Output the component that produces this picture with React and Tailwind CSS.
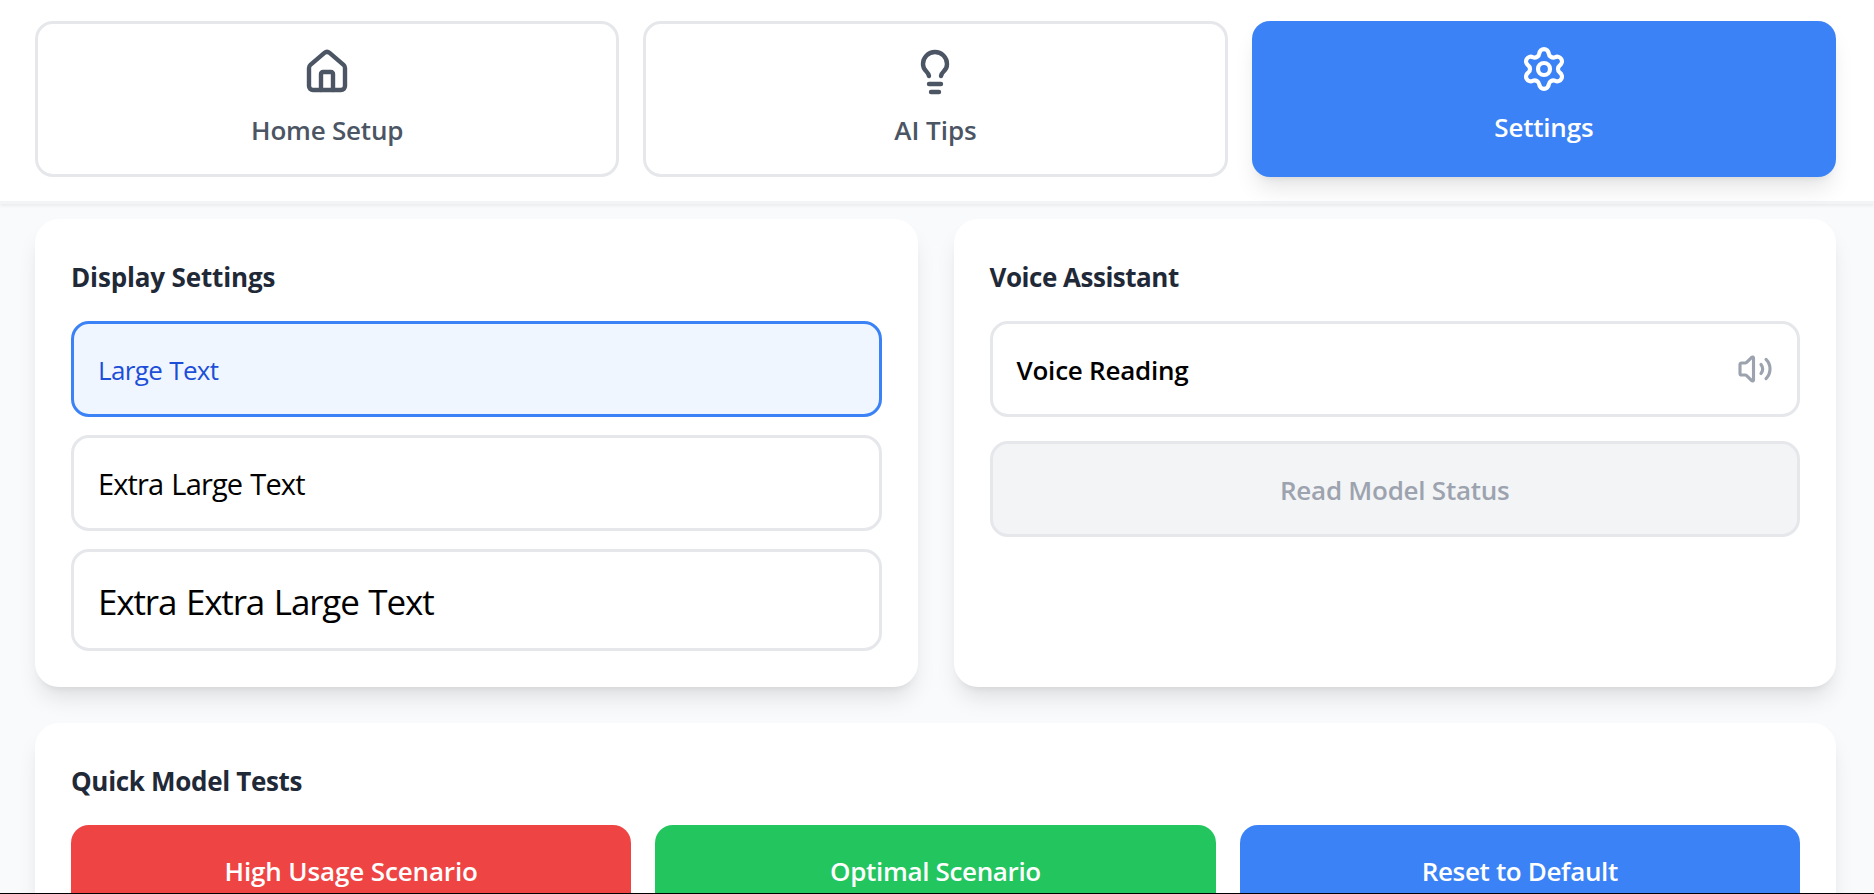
import { House, Lightbulb, Settings, Volume2 } from "lucide-react";

const tab = "flex h-[156px] flex-col items-center rounded-[18px] font-semibold text-[26px] leading-[42px]";
const raised = "shadow-[0_15px_22.5px_-4.5px_rgba(0,0,0,0.1),0_6px_9px_-6px_rgba(0,0,0,0.1)]";
const card = `rounded-3xl bg-white p-9 ${raised}`;
const heading = "mb-[23px] h-[43px] whitespace-nowrap pt-px text-[26px] font-bold leading-[42px] text-[#1f2937]";
const option = "flex w-full items-center rounded-[18px] border-[3px] px-6 whitespace-nowrap";
const quick = "flex h-[90px] items-center justify-center rounded-[18px] pt-0.5 text-[26px] font-semibold text-white whitespace-nowrap";

export default function App() {
  return (
    <div className="flex h-[894px] w-[1874px] flex-col overflow-hidden border-b border-black bg-[#f9fafc] font-['Open_Sans','Noto_Sans',sans-serif] text-black">
      <header className="h-[204px] shrink-0 border-b-[3px] border-[#f3f4f6] bg-white pt-[21px] pr-[38px] pl-[35px] shadow-[0_2px_3px_rgba(0,0,0,0.06)]">
        <nav className="grid grid-cols-3 gap-6">
          <button className={`${tab} border-[3px] border-[#e5e7eb] bg-white pt-6 tracking-[-0.2px] text-[#4b5563]`}>
            <House size={48} strokeWidth={2.2} />
            <span className="mt-[13px]">Home Setup</span>
          </button>
          <button className={`${tab} border-[3px] border-[#e5e7eb] bg-white pt-6 tracking-[-0.05px] text-[#4b5563]`}>
            <Lightbulb size={48} strokeWidth={2.2} />
            <span className="mt-[13px]">AI Tips</span>
          </button>
          <button className={`${tab} ${raised} bg-[#3b82f6] pt-6 tracking-[-0.2px] text-white`}>
            <Settings size={48} strokeWidth={2.1} />
            <span className="mt-[13px]">Settings</span>
          </button>
        </nav>
      </header>
      <main className="flex flex-col gap-9 pt-[15px] pr-[38px] pl-[35px]">
        <div className="grid h-[468px] grid-cols-2 gap-9">
          <section className={card}>
            <h3 className={`${heading} tracking-[-0.15px]`}>Display Settings</h3>
            <div className="flex flex-col gap-[18px]">
              <button className={`${option} h-24 border-[#3b82f6] bg-[#eff6ff] pt-0.5 text-[26px] tracking-[-0.65px] [word-spacing:1px] text-[#1d4ed8]`}>
                Large Text
              </button>
              <button className={`${option} h-24 border-[#e5e7eb] pt-0.5 text-[29px] tracking-[-0.86px] [word-spacing:1.4px]`}>
                Extra Large Text
              </button>
              <button className={`${option} h-[102px] border-[#e5e7eb] pt-1 text-[35px] tracking-[-1.15px] [word-spacing:1.7px]`}>
                Extra Extra Large Text
              </button>
            </div>
          </section>
          <section className={card}>
            <h3 className={`${heading} tracking-[-0.48px]`}>Voice Assistant</h3>
            <div className="flex flex-col gap-6">
              <button className={`${option} h-24 justify-between border-[#e5e7eb] text-[26px] font-semibold tracking-[-0.23px]`}>
                <span className="pt-0.5">Voice Reading</span>
                <Volume2 size={36} strokeWidth={2.1} className="text-[#9ca3af]" />
              </button>
              <button className={`${option} h-24 justify-center border-[#e5e7eb] bg-[#f3f4f6] pt-0.5 text-[26px] font-semibold tracking-[-0.25px] text-[#9ca3af]`}>
                Read Model Status
              </button>
            </div>
          </section>
        </div>
        <section className={card}>
          <h3 className={`${heading} tracking-[-0.32px]`}>Quick Model Tests</h3>
          <div className="grid grid-cols-3 gap-6">
            <button className={`${quick} bg-[#ef4444] tracking-[-0.13px]`}>High Usage Scenario</button>
            <button className={`${quick} bg-[#22c55e] tracking-[-0.34px]`}>Optimal Scenario</button>
            <button className={`${quick} bg-[#3b82f6] tracking-[-0.34px]`}>Reset to Default</button>
          </div>
        </section>
      </main>
    </div>
  );
}
